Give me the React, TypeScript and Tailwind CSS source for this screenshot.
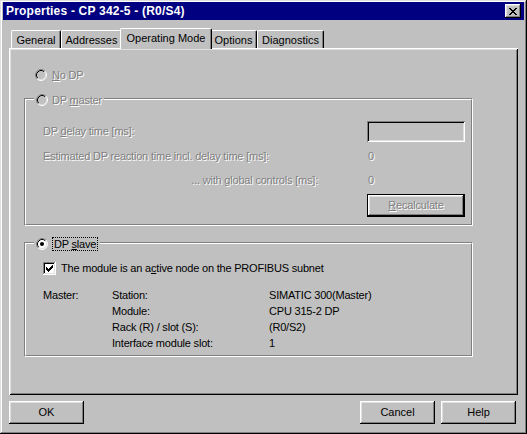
import React from "react";

const raised =
  "shadow-[inset_-1px_-1px_#000,inset_1px_1px_#fff,inset_-2px_-2px_#808080,inset_2px_2px_#dfdfdf]";
const etched = "text-[#808080] [text-shadow:1px_1px_0_#fff]";

function Radio({ checked, disabled }: { checked?: boolean; disabled?: boolean }) {
  return (
    <svg width="12" height="12" viewBox="0 0 12 12" className="shrink-0">
      <circle cx="6" cy="6" r="5" fill={disabled ? "#c0c0c0" : "#fff"} />
      <path d="M2.11 9.89 A5.5 5.5 0 0 1 9.89 2.11" fill="none" stroke="#808080" />
      <path d="M9.89 2.11 A5.5 5.5 0 0 1 2.11 9.89" fill="none" stroke="#fff" />
      <path d="M2.82 9.18 A4.5 4.5 0 0 1 9.18 2.82" fill="none" stroke="#000" />
      <path d="M9.18 2.82 A4.5 4.5 0 0 1 2.82 9.18" fill="none" stroke="#dfdfdf" />
      {checked && <circle cx="6" cy="6" r="2" fill="#000" />}
    </svg>
  );
}

function Checkbox() {
  const rows = [2, 3, 4, 3, 2, 1, 0];
  return (
    <svg width="13" height="13" viewBox="0 0 13 13" className="shrink-0" shapeRendering="crispEdges">
      <rect x="0" y="0" width="13" height="13" fill="#fff" />
      <rect x="0" y="0" width="12" height="1" fill="#808080" />
      <rect x="0" y="0" width="1" height="12" fill="#808080" />
      <rect x="1" y="1" width="10" height="1" fill="#000" />
      <rect x="1" y="1" width="1" height="10" fill="#000" />
      <rect x="1" y="11" width="11" height="1" fill="#dfdfdf" />
      <rect x="11" y="1" width="1" height="11" fill="#dfdfdf" />
      {rows.map((r, c) => (
        <rect key={c} x={3 + c} y={3 + r} width="1" height="3" fill="#000" />
      ))}
    </svg>
  );
}

function CloseGlyph() {
  const px: [number, number, number][] = [
    [0, 0, 2], [6, 0, 2],
    [1, 1, 2], [5, 1, 2],
    [2, 2, 4],
    [3, 3, 2],
    [2, 4, 4],
    [1, 5, 2], [5, 5, 2],
    [0, 6, 2], [6, 6, 2],
  ];
  return (
    <svg width="8" height="7" viewBox="0 0 8 7" shapeRendering="crispEdges">
      {px.map(([x, y, w], i) => (
        <rect key={i} x={x} y={y} width={w} height="1" fill="#000" />
      ))}
    </svg>
  );
}

// etched group box: gray line outside/top-left, white line inside
function GroupBox({ legend, className, children }: { legend: React.ReactNode; className: string; children: React.ReactNode }) {
  return (
    <div className={`relative ml-[15px] w-[449px] border-t border-l border-t-[#808080] border-l-[#808080] border-b border-r border-b-white border-r-white ${className}`}>
      <div className="h-full border-t border-l border-t-white border-l-white border-b border-r border-b-[#808080] border-r-[#808080]">
        {children}
      </div>
      <div className="absolute -top-[6px] left-[9px] flex h-[14px] items-center gap-[4px] bg-[#c0c0c0] px-[2px]">
        {legend}
      </div>
    </div>
  );
}

const tabs = [
  { name: "General", w: "w-[50px]" },
  { name: "Addresses", w: "w-[61px]" },
  { name: "Operating Mode", w: "w-[92px]", active: true },
  { name: "Options", w: "w-[47px]" },
  { name: "Diagnostics", w: "w-[67px]" },
];

export default function App() {
  return (
    <div className="h-[434px] w-[527px] overflow-hidden bg-[#c0c0c0] pt-[2px] font-['Liberation_Sans',Arial,sans-serif] text-[11px] leading-[13px] tracking-[-0.2px] text-black shadow-[inset_-1px_-1px_#000,inset_1px_1px_#dfdfdf,inset_-2px_-2px_#808080,inset_2px_2px_#fff]">
      {/* Title bar */}
      <div className="mx-[3px] flex h-[18px] items-center justify-between bg-[#000080] pl-[3px] pr-[3px]">
        <span className="text-[12px] font-bold tracking-[0.2px] text-white">Properties - CP 342-5 - (R0/S4)</span>
        <div className={`flex h-[14px] w-[16px] items-center justify-center bg-[#c0c0c0] ${raised}`}>
          <CloseGlyph />
        </div>
      </div>

      <div className="px-[9px]">
        {/* Tabs */}
        <div className="mt-[8px] flex h-[20px] items-end pl-[2px] tracking-normal">
          {tabs.map((t) =>
            t.active ? (
              <div
                key={t.name}
                className={`relative z-10 -mx-[2px] -mb-[1px] flex h-[21px] ${t.w} shrink-0 items-start justify-center rounded-t-[2px] border-t border-l border-white border-r border-r-black bg-[#c0c0c0] pt-[3px] shadow-[inset_-1px_0_#808080]`}
              >
                {t.name}
              </div>
            ) : (
              <div
                key={t.name}
                className={`flex h-[18px] ${t.w} shrink-0 items-start justify-center rounded-t-[2px] border-t border-l border-white border-r border-r-black pt-[3px] shadow-[inset_-1px_0_#808080]`}
              >
                {t.name}
              </div>
            )
          )}
        </div>

        {/* Tab page */}
        <div className="h-[347px] pt-[21px] shadow-[inset_1px_1px_#fff,inset_-1px_-1px_#000,inset_2px_2px_#dfdfdf,inset_-2px_-2px_#808080]">
          <div className={`ml-[26px] flex h-[12px] items-center gap-[5px] ${etched}`}>
            <Radio disabled />
            <span>
              <u>N</u>o DP
            </span>
          </div>

          <GroupBox
            className="mt-[17px] h-[128px]"
            legend={
              <>
                <Radio disabled />
                <span className={etched}>
                  DP <u>m</u>aster
                </span>
              </>
            }
          >
            <div className="flex flex-col gap-[4px] pl-[17px] pt-[21px]">
              <div className="flex h-[21px] items-center">
                <span className={`w-[324px] ${etched}`}>
                  DP <u>d</u>elay time [ms]:
                </span>
                <div className="h-[21px] w-[98px] shadow-[inset_1px_1px_#808080,inset_-1px_-1px_#fff,inset_2px_2px_#000,inset_-2px_-2px_#dfdfdf]" />
              </div>
              <div className="flex h-[20px] items-center">
                <span className={`w-[324px] ${etched}`}>Estimated DP reaction time incl. delay time [ms]:</span>
                <span className={`pl-[1px] ${etched}`}>0</span>
              </div>
              <div className="flex h-[20px] items-center">
                <span className={`w-[275px] text-right ${etched}`}>... with global controls [ms]:</span>
                <span className={`ml-[49px] pl-[1px] ${etched}`}>0</span>
              </div>
              <div className="flex">
                <div className="ml-[324px] h-[23px] w-[98px] border border-black">
                  <div className={`flex h-full items-center justify-center ${raised} ${etched}`}>
                    <span>
                      <u>R</u>ecalculate
                    </span>
                  </div>
                </div>
              </div>
            </div>
          </GroupBox>

          <GroupBox
            className="mt-[16px] h-[115px]"
            legend={
              <>
                <Radio checked />
                <span className="border border-dotted border-black px-[1px] leading-[12px]">
                  DP <u>s</u>lave
                </span>
              </>
            }
          >
            <div className="pl-[17px] pt-[18px]">
              <div className="flex h-[13px] items-center gap-[5px]">
                <Checkbox />
                <span>
                  The module is an a<u>c</u>tive node on the PROFIBUS subnet
                </span>
              </div>
              <div className="mt-[12px] grid grid-cols-[69px_157px_1fr] leading-[16px]">
                <span>Master:</span>
                <span>Station:</span>
                <span>SIMATIC 300(Master)</span>
                <span />
                <span>Module:</span>
                <span>CPU 315-2 DP</span>
                <span />
                <span>Rack (R) / slot (S):</span>
                <span>(R0/S2)</span>
                <span />
                <span>Interface module slot:</span>
                <span>1</span>
              </div>
            </div>
          </GroupBox>
        </div>

        {/* Bottom buttons */}
        <div className="mt-[6px] flex justify-between pr-[2px] tracking-normal">
          <button className={`h-[23px] w-[75px] ${raised}`}>OK</button>
          <div className="flex gap-[6px]">
            <button className={`h-[23px] w-[75px] ${raised}`}>Cancel</button>
            <button className={`h-[23px] w-[75px] ${raised}`}>Help</button>
          </div>
        </div>
      </div>
    </div>
  );
}
